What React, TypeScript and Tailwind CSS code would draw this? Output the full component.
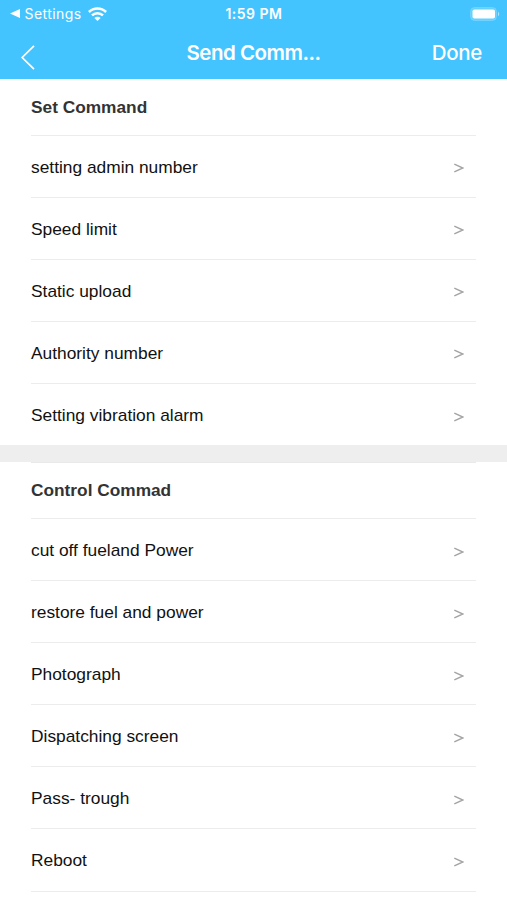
const setCommands = [
  'setting admin number',
  'Speed limit',
  'Static upload',
  'Authority number',
  'Setting vibration alarm',
];

const controlCommands = [
  'cut off fueland Power',
  'restore fuel and power',
  'Photograph',
  'Dispatching screen',
  'Pass- trough',
  'Reboot',
];

function StatusBar() {
  return (
    <div className="grid h-[27px] grid-cols-3 items-center pl-[10px] pr-[9px] text-[14px] leading-none">
      <div className="flex items-center">
        <svg width="10" height="9" viewBox="0 0 10 9" fill="currentColor">
          <path d="M0 4.5 10 0v9z" />
        </svg>
        <span className="ml-[4.5px] whitespace-nowrap text-[14px] tracking-[0.45px]">Settings</span>
        <svg className="ml-[6px]" width="19" height="14" viewBox="0 0 19 14" fill="none" stroke="currentColor" strokeWidth="2.5">
          <path d="M.9 5a12.3 12.3 0 0 1 17.2 0" />
          <path d="M4 8.4a7.8 7.8 0 0 1 11 0" />
          <path d="M9.5 14 6.4 11a4.3 4.3 0 0 1 6.2 0z" fill="currentColor" stroke="none" />
        </svg>
      </div>
      <span className="pt-px text-center font-semibold whitespace-nowrap text-[14px] tracking-[0.5px]">1:59 PM</span>
      <svg className="-mr-[2px] justify-self-end" width="30" height="14" viewBox="0 0 30 14">
        <rect x=".7" y=".7" width="25.6" height="12.6" rx="3.6" fill="#62cfff" stroke="#7ad6ff" />
        <rect x="2.5" y="2.5" width="22.5" height="9" rx="1.8" fill="white" />
        <path d="M28 4.8c1.7.7 1.7 3.7 0 4.4z" fill="#a8e4ff" />
      </svg>
    </div>
  );
}

function NavBar() {
  return (
    <div className="grid h-[52px] grid-cols-[1fr_auto_1fr] items-center pl-[21px] pr-[25px] text-[20.5px] leading-none">
      <svg className="mt-[9px]" width="14" height="25" viewBox="0 0 14 25" fill="none" stroke="currentColor" strokeWidth="1.7">
        <path d="M13 .8 1.2 12.5 13 24.2" />
      </svg>
      <span className="-mr-[2px] pl-[2px] font-semibold tracking-[-0.5px]">Send Comm...</span>
      <span className="justify-self-end font-medium tracking-[-0.35px]">Done</span>
    </div>
  );
}

function Section({ title, items, first }: { title: string; items: string[]; first?: boolean }) {
  return (
    <section className="px-[31px]">
      <h2
        className={
          first
            ? 'h-[56px] pt-[18px] text-[17.3px] leading-[20px] font-bold text-[#333]'
            : 'h-[56px] border-t border-[#e9e9e9] pt-[17px] text-[17.3px] leading-[20px] font-bold text-[#333]'
        }
      >
        {title}
      </h2>
      <ul>
        {items.map((item) => (
          <li key={item} className="flex h-[62.06px] items-center justify-between border-t border-[#ececec] pt-[0.6px] pr-[12px] text-[17.35px]">
            <span>{item}</span>
            <svg className="mt-[3px]" width="10" height="10" viewBox="0 0 10 10" fill="none" stroke="#a3a3a3" strokeWidth="1.4">
              <path d="M.3 1.1 9 5 .3 8.9" />
            </svg>
          </li>
        ))}
      </ul>
    </section>
  );
}

export default function App() {
  return (
    <div className="h-[900px] w-full overflow-hidden bg-white font-['Liberation_Sans',Arial,sans-serif] text-[#111]">
      <header className="h-[79px] bg-[#44c4ff] font-['Inter',sans-serif] text-white">
        <StatusBar />
        <NavBar />
      </header>
      <main>
        <Section title="Set Command" items={setCommands} first />
        <div className="h-[17px] bg-[#eee]" />
        <Section title="Control Commad" items={controlCommands} />
        <div className="mx-[31px] border-t border-[#ececec]" />
      </main>
    </div>
  );
}
